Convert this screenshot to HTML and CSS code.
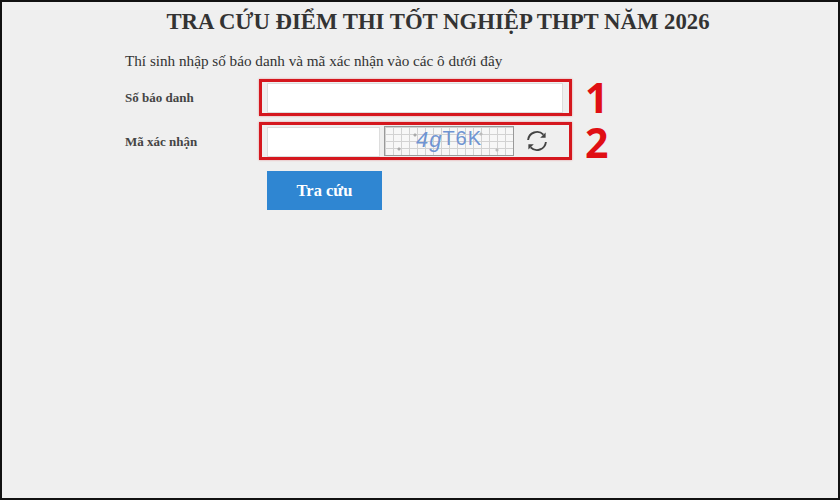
FILE: index.html
```html
<!DOCTYPE html>
<html lang="vi">
<head>
    <meta charset="UTF-8">
    <meta name="viewport" content="width=device-width, initial-scale=1.0">
    <title>Tra cứu điểm thi</title>
    <link rel="stylesheet" href="styles.css">
</head>
<body>
    <div class="page">
        <h1 class="title">TRA CỨU ĐIỂM THI TỐT NGHIỆP THPT NĂM 2026</h1>

        <div class="form">
            <p class="intro">Thí sinh nhập số báo danh và mã xác nhận vào các ô dưới đây</p>

            <!-- Số báo danh -->
            <div class="row row-sbd">
                <label class="label">Số báo danh</label>
                <input type="text" class="input input-sbd">
                <div class="mark mark-1"><span class="mark-num">1</span></div>
            </div>

            <!-- Mã xác nhận -->
            <div class="row row-captcha">
                <label class="label">Mã xác nhận</label>
                <input type="text" class="input input-code">
                <div class="captcha"><span class="captcha-text">4g<span class="captcha-rest">T6K</span></span></div>
                <svg class="refresh" width="22" height="22" viewBox="0 0 22 22" fill="none" stroke="#444" stroke-width="1.9">
                    <path d="M2.1 10A9 9 0 0 1 17.4 4.6"/>
                    <path d="M19.9 12A9 9 0 0 1 4.6 17.4"/>
                    <path d="M19.6 2.4v5.4h-5.4z" fill="#444" stroke="none"/>
                    <path d="M2.4 19.6v-5.4h5.4z" fill="#444" stroke="none"/>
                </svg>
                <div class="mark mark-2"><span class="mark-num">2</span></div>
            </div>

            <button class="btn">Tra cứu</button>
        </div>
    </div>
</body>
</html>
```

FILE: styles.css
```css
* {
    box-sizing: border-box;
}

body {
    margin: 0;
    font-family: "Liberation Serif", "Times New Roman", serif;
    color: #333;
}

.page {
    width: 840px;
    height: 500px;
    background-color: #efefef;
    border: 2px solid #111;
    overflow: hidden;
}

.title {
    margin: 0;
    padding-top: 7px;
    font-size: 22.75px;
    line-height: 26px;
    font-weight: bold;
    text-align: center;
    width: 872px;
}

.form {
    padding-left: 123px;
}

.intro {
    margin: 17px 0 0;
    font-size: 15.2px;
    line-height: 18px;
}

.row {
    position: relative;
    display: flex;
    align-items: center;
}

.row-sbd {
    margin-top: 13px;
    height: 30px;
}

.row-captcha {
    margin-top: 14px;
    height: 30px;
}

.label {
    width: 142px;
    font-size: 13px;
    font-weight: bold;
    color: #444;
}

.input {
    height: 30px;
    border: 1px solid #ddd;
    background-color: #fff;
    padding: 0 6px;
}

.input-sbd {
    width: 296px;
}

.input-code {
    width: 113px;
}

.captcha {
    width: 130px;
    height: 30px;
    margin: -2px 0 0 4px;
    border: 1px solid #999;
    background-color: #f7f7f7;
    background-image:
        radial-gradient(circle at 30px 8px, #aaa 1px, transparent 2px),
        radial-gradient(circle at 14px 22px, #aaa 1px, transparent 2px),
        radial-gradient(circle at 112px 23px, #bbb 1px, transparent 2px),
        radial-gradient(circle at 96px 7px, #bbb 1px, transparent 2px),
        linear-gradient(#d2d2d2 1px, transparent 1px),
        linear-gradient(90deg, #d2d2d2 1px, transparent 1px);
    background-size: 100% 100%, 100% 100%, 100% 100%, 100% 100%, 8px 7px, 8px 7px;
    text-align: center;
    overflow: hidden;
}

.captcha-text {
    font-family: "Liberation Sans", Arial, sans-serif;
    font-size: 22px;
    line-height: 26px;
    font-style: italic;
    color: #6f94d2;
    letter-spacing: 1px;
}

.captcha-rest {
    font-style: normal;
    font-size: 20px;
    position: relative;
    top: -2px;
}

.refresh {
    margin: -2px 0 0 12px;
}

/* Rode kaders over het formulier */
.mark {
    position: absolute;
    left: 134px;
    width: 313px;
    border: 3px solid #d5171e;
    box-shadow: 0 0 2px rgba(213, 23, 30, 0.4);
}

.mark-1 {
    top: -4px;
    height: 37px;
}

.mark-2 {
    top: -5px;
    height: 38px;
}

.mark-num {
    position: absolute;
    left: 323px;
    top: -3px;
    font-family: "Open Sans", "Noto Sans", sans-serif;
    font-size: 41px;
    line-height: 36px;
    font-weight: bold;
    color: #e00f14;
}

.mark-2 .mark-num {
    top: -1px;
}

.btn {
    display: block;
    width: 115px;
    height: 39px;
    margin: 14px 0 0 142px;
    border: none;
    background-color: #2f86d2;
    color: #fff;
    font-family: "Liberation Serif", "Times New Roman", serif;
    font-size: 16.5px;
    font-weight: bold;
}
```
